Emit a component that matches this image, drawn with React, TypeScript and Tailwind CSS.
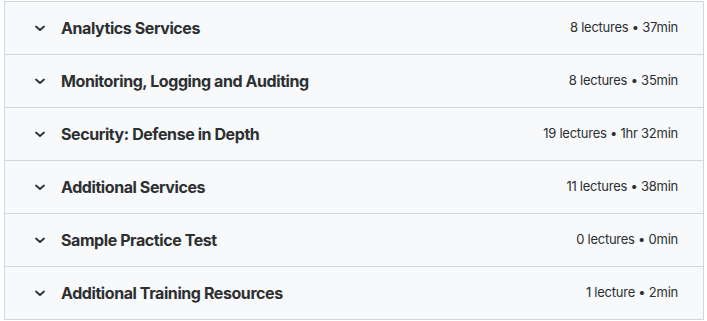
const sections = [
  { title: 'Analytics Services', meta: '8 lectures • 37min' },
  { title: 'Monitoring, Logging and Auditing', meta: '8 lectures • 35min' },
  { title: 'Security: Defense in Depth', meta: '19 lectures • 1hr 32min' },
  { title: 'Additional Services', meta: '11 lectures • 38min' },
  { title: 'Sample Practice Test', meta: '0 lectures • 0min' },
  { title: 'Additional Training Resources', meta: '1 lecture • 2min' },
]

function Chevron() {
  return (
    <svg width="12" height="12" viewBox="0 0 12 12" className="text-[#2d2f31]">
      <path d="M2 4.5 6 8l4-3.5" fill="none" stroke="currentColor" strokeWidth="1.8" strokeLinecap="round" strokeLinejoin="round" />
    </svg>
  )
}

export default function App() {
  return (
    <div className="min-h-screen bg-white pt-px pl-1 font-['Inter',sans-serif]">
      <div className="w-[700px] border border-[#d1d7dc]">
        {sections.map((s, i) => (
          <div
            key={s.title}
            className={`flex items-center bg-[#f7f9fa] pl-[29px] pr-[25px] text-[#2d2f31] ${i < sections.length - 1 ? 'h-[53px] border-b border-[#d1d7dc]' : 'h-[52px]'}`}
          >
            <Chevron />
            <span className="ml-[15px] flex-1 text-[16px] font-bold tracking-[-0.42px]">{s.title}</span>
            <span className="text-[13px] tracking-[-0.25px]">{s.meta}</span>
          </div>
        ))}
      </div>
    </div>
  )
}
